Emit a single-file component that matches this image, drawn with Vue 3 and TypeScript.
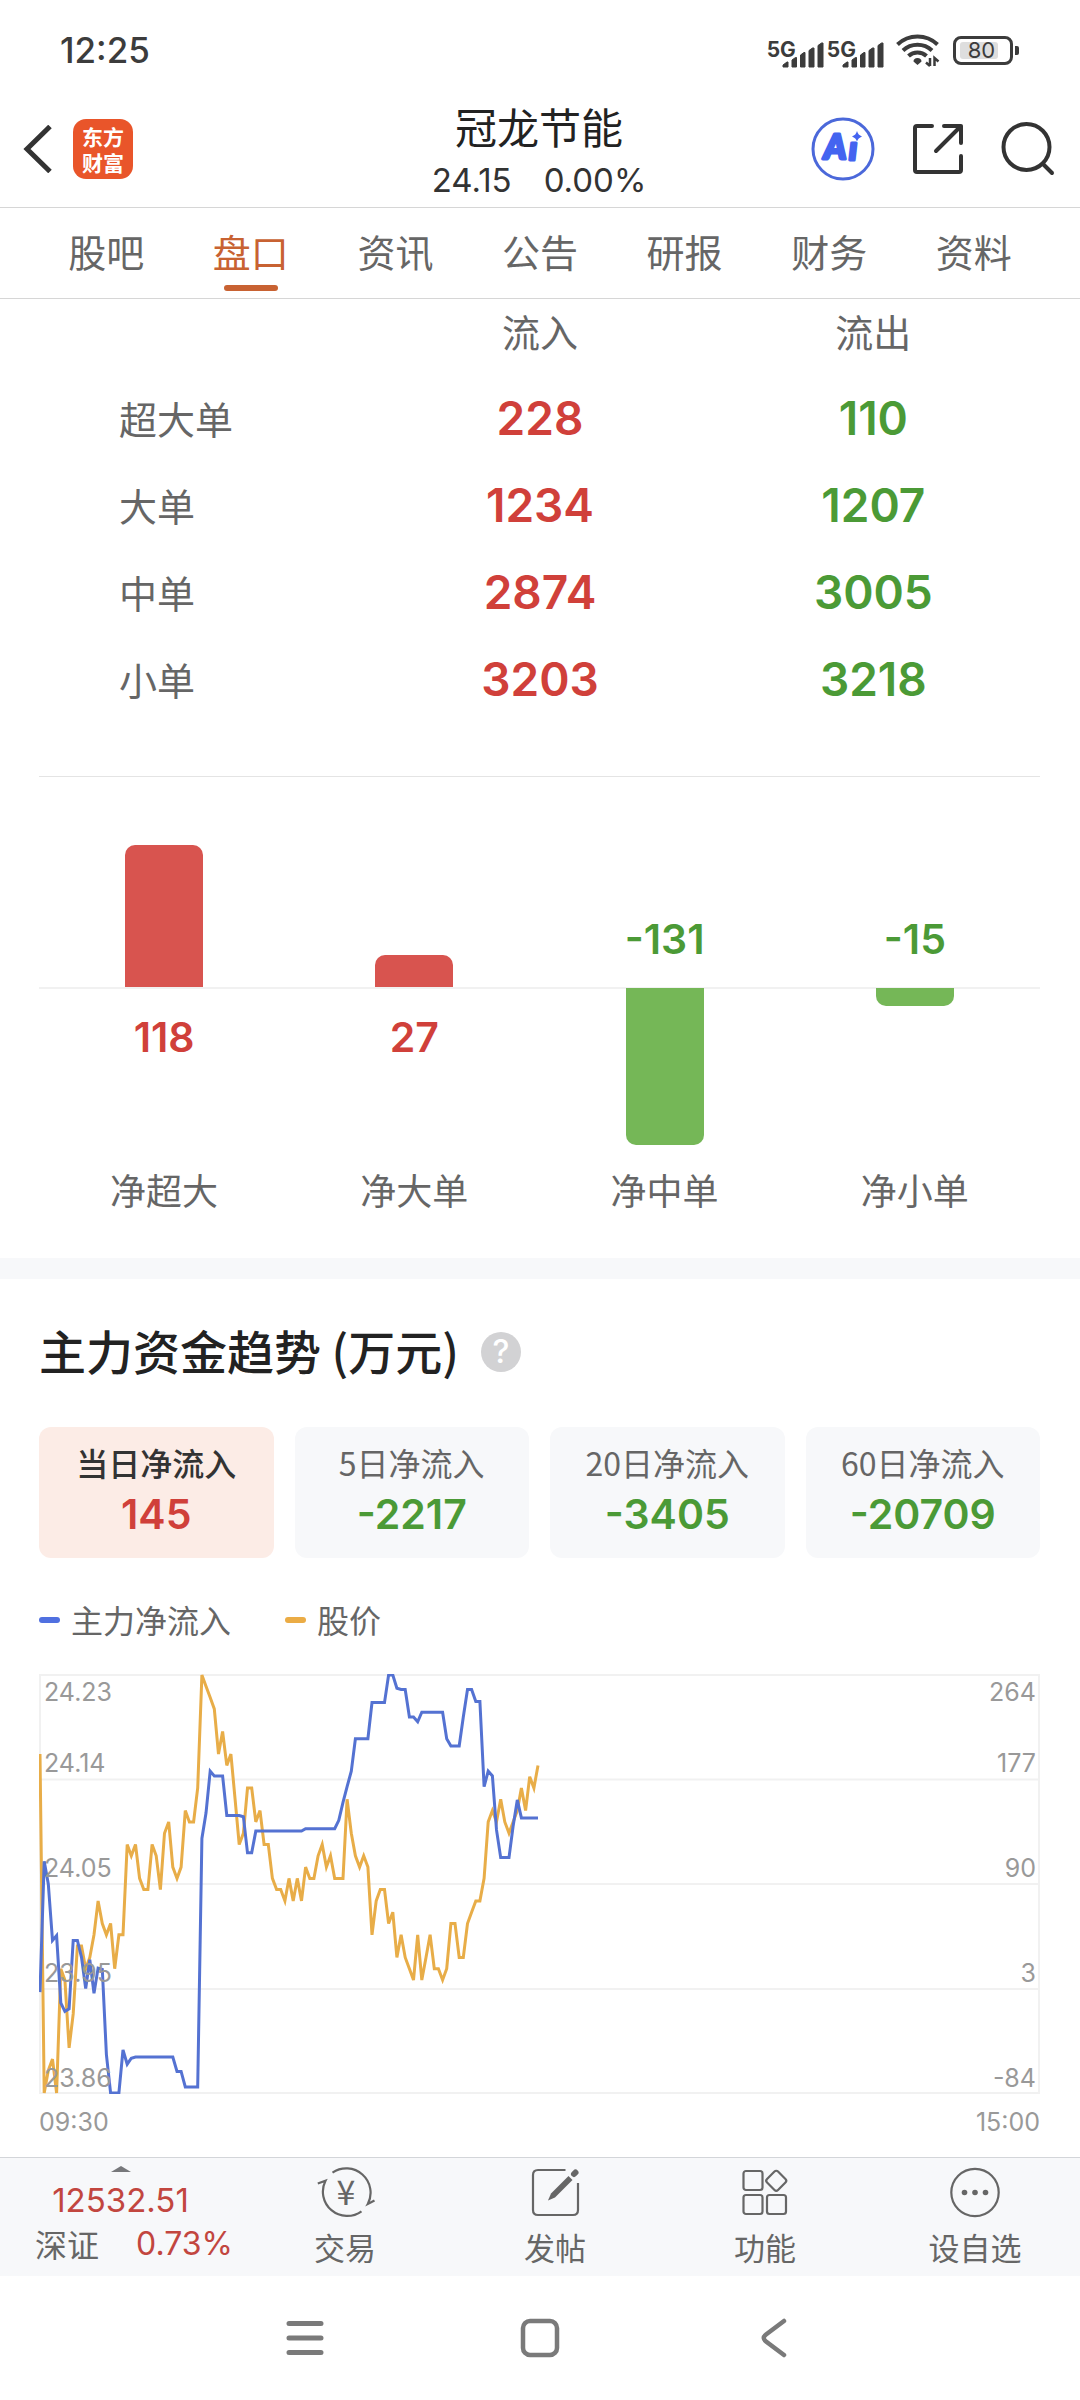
<script setup lang="ts">
interface OrderRow {
  label: string
  inflow: number
  outflow: number
}

interface NetBar {
  label: string
  value: number
}

interface Period {
  label: string
  value: number
}

const tabs: string[] = ['股吧', '盘口', '资讯', '公告', '研报', '财务', '资料']
const activeTab = '盘口'

const orders: OrderRow[] = [
  { label: '超大单', inflow: 228, outflow: 110 },
  { label: '大单', inflow: 1234, outflow: 1207 },
  { label: '中单', inflow: 2874, outflow: 3005 },
  { label: '小单', inflow: 3203, outflow: 3218 },
]

const netBars: NetBar[] = [
  { label: '净超大', value: 118 },
  { label: '净大单', value: 27 },
  { label: '净中单', value: -131 },
  { label: '净小单', value: -15 },
]

const barHeight = (value: number): string => `${Math.round(Math.abs(value) * 1.2)}px`

const periods: Period[] = [
  { label: '当日净流入', value: 145 },
  { label: '5日净流入', value: -2217 },
  { label: '20日净流入', value: -3405 },
  { label: '60日净流入', value: -20709 },
]

const priceAxis: string[][] = [['24.23', '24.14'], ['24.05'], ['23.95'], ['23.86']]
const flowAxis: string[][] = [['264', '177'], ['90'], ['3'], ['-84']]

// Minute prices, in cents above 23.86
const priceTicks: number[] = [
  30, 0, 2, 3, 0, 11, 10, 4, 7, 13, 13, 11, 12, 14, 17, 15, 14, 15, 11, 14,
  14, 22, 21, 22, 19, 18, 18, 22, 21, 18, 23, 24, 20, 19, 20, 25, 24, 24, 27, 37,
  36, 35, 34, 30, 32, 29, 30, 26, 22, 23, 27, 27, 24, 25, 22, 22, 19, 18, 18, 17,
  19, 17, 19, 17, 20, 19, 19, 21, 22, 20, 21, 19, 19, 19, 26, 23, 21, 20, 21, 20,
  14, 17, 18, 18, 15, 16, 12, 14, 12, 11, 10, 14, 10, 12, 14, 11, 11, 10, 11, 15,
  15, 12, 12, 15, 16, 17, 17, 19, 24, 25, 24, 26, 24, 23, 24, 25, 27, 25, 28, 27, 29,
]

// Minute net inflow of main funds, in units of 10,000 yuan
const netInflow: number[] = [
  0, 109, 90, 43, 47, -9, -16, -14, 43, 43, 29, 3, 27, -1, 20, 19, -52, -84, -84, -84,
  -48, -60, -55, -54, -54, -54, -54, -54, -54, -54, -54, -54, -54, -66, -66, -79, -79, -79, -79, 128,
  149, 184, 180, 180, 180, 147, 147, 147, 147, 146, 116, 116, 134, 134, 134, 134, 134, 134, 134, 134,
  134, 134, 134, 134, 136, 136, 136, 136, 136, 136, 136, 136, 143, 158, 171, 184, 211, 211, 211, 211,
  241, 241, 241, 241, 264, 264, 253, 252, 252, 229, 229, 225, 233, 233, 233, 233, 233, 233, 211, 205,
  205, 205, 229, 252, 252, 242, 242, 171, 184, 180, 135, 112, 112, 112, 138, 160, 145, 145, 145, 145, 145,
]

const chartHeight = 420
const toPoints = (values: number[], min: number, max: number): string =>
  values
    .map((v, i) => {
      const x = 1 + i * 4.15
      const y = 1 + ((max - v) / (max - min)) * (chartHeight - 2)
      return `${x.toFixed(1)},${y.toFixed(1)}`
    })
    .join(' ')

const pricePoints = toPoints(priceTicks, 0, 37)
const flowPoints = toPoints(netInflow, -84, 264)
</script>

<template>
  <div class="page">
    <div class="status">
      <time class="clock">12:25</time>
      <div class="signals">
        <div v-for="n in 2" :key="n" class="signal">
          <span class="generation">5G</span>
          <svg width="42" height="28" viewBox="0 0 42 28" aria-hidden="true">
            <path d="M1 27v-2l4-3h1v5zM10 27v-7l3.500-2.500h1V27zM18.500 27V15l3.500-2.500h1V27zM27 27V10.500L30.500 8h1.500v19zM36 27V5.500L39.500 3H41v24z" stroke="#3c3c3c" stroke-linejoin="round" />
          </svg>
        </div>
        <svg class="wifi" width="46" height="36" viewBox="0 0 46 36" fill="none" stroke="#3c3c3c" stroke-width="4" aria-hidden="true">
          <path d="M2.500 12.500a29 29 0 0 1 40 0M8 18.500a21 21 0 0 1 29 0M13.500 24a13 13 0 0 1 18 0" />
          <path d="M22.500 26c2.500 0 4 1.500 4 3.500l-4 3.500-4-3.500c0-2 1.500-3.500 4-3.500z" fill="#3c3c3c" stroke="none" />
          <path d="M35 26v8M31 30.500l4 3.500M39.500 34v-8l4 3.500" stroke-width="2.500" />
        </svg>
        <div class="battery"><span>80</span></div>
      </div>
    </div>

    <header class="header">
      <div class="header-left">
        <button class="icon-button" aria-label="返回">
          <svg width="30" height="48" viewBox="0 0 30 48" fill="none" stroke="#333" stroke-width="5"><path d="M27 1.500L4 24l23 22.500" /></svg>
        </button>
        <a href="#" class="logo"><span>东方</span><span>财富</span></a>
      </div>
      <div class="heading">
        <h1>冠龙节能</h1>
        <p class="quote"><span>24.15</span><span>0.00%</span></p>
      </div>
      <div class="header-right">
        <button class="icon-button" aria-label="Ai">
          <svg width="64" height="64" viewBox="0 0 64 64" fill="#4464f0">
            <circle cx="32" cy="32" r="30" fill="none" stroke="#4b68da" stroke-width="3" />
            <g stroke="#4464f0" stroke-width="3" stroke-linejoin="round" font-weight="900" font-style="italic" font-family="Lato, sans-serif">
              <text x="13" y="42" font-size="34">A</text>
              <text x="38" y="43" font-size="32">ı</text>
            </g>
            <path d="M46 14q1 4 5 5.500q-4 1.500-5 5q-1-3.500-5-5q4-1.500 5-5.500z" />
          </svg>
        </button>
        <button class="icon-button" aria-label="分享">
          <svg width="52" height="52" viewBox="0 0 52 52" fill="none" stroke="#333" stroke-width="4" stroke-linecap="round" stroke-linejoin="round">
            <path d="M20 3H5Q3 3 3 5v42q0 2 2 2h42q2 0 2-2V33M32 3h17v17M49 3L24 28" />
          </svg>
        </button>
        <button class="icon-button" aria-label="搜索">
          <svg width="54" height="54" viewBox="0 0 54 54" fill="none" stroke="#333" stroke-width="4" stroke-linecap="round">
            <circle cx="25.500" cy="25" r="23" /><path d="M42 42l9 9" />
          </svg>
        </button>
      </div>
    </header>

    <nav class="tabs">
      <a v-for="tab in tabs" :key="tab" href="#" class="tab" :class="{ active: tab === activeTab }">{{ tab }}</a>
    </nav>

    <main class="content">
      <table class="orders">
        <thead>
          <tr><th></th><th scope="col">流入</th><th scope="col">流出</th></tr>
        </thead>
        <tbody>
          <tr v-for="row in orders" :key="row.label">
            <th scope="row">{{ row.label }}</th>
            <td class="up">{{ row.inflow }}</td>
            <td class="down">{{ row.outflow }}</td>
          </tr>
        </tbody>
      </table>

      <section class="net">
        <div v-for="bar in netBars" :key="bar.label" class="net-column">
          <div class="net-upper">
            <span v-if="bar.value < 0" class="net-value down">{{ bar.value }}</span>
            <div v-else class="bar bar-up" :style="{ height: barHeight(bar.value) }"></div>
          </div>
          <div class="net-lower">
            <span v-if="bar.value > 0" class="net-value up">{{ bar.value }}</span>
            <div v-else class="bar bar-down" :style="{ height: barHeight(bar.value) }"></div>
          </div>
          <span class="net-label">{{ bar.label }}</span>
        </div>
      </section>

      <section class="trend">
        <div class="trend-title">
          <h2>主力资金趋势 (万元)</h2>
          <button class="help" aria-label="说明">?</button>
        </div>

        <div class="periods">
          <button v-for="(period, i) in periods" :key="period.label" class="period" :class="{ selected: i === 0 }">
            <span class="period-label">{{ period.label }}</span>
            <span class="period-value" :class="period.value < 0 ? 'down' : 'up'">{{ period.value }}</span>
          </button>
        </div>

        <div class="legend">
          <span class="legend-item flow">主力净流入</span>
          <span class="legend-item price">股价</span>
        </div>

        <div class="chart">
          <svg class="plot" width="100%" height="420" viewBox="0 0 1001 420" preserveAspectRatio="none" fill="none" aria-hidden="true">
            <path d="M1 1H1000V419H1zM1 105.500H1000M1 210H1000M1 315H1000" stroke="#f1f1f1" stroke-width="2" vector-effect="non-scaling-stroke" />
            <polyline :points="pricePoints" stroke="#e8ad48" stroke-width="3" vector-effect="non-scaling-stroke" />
            <polyline :points="flowPoints" stroke="#5472d2" stroke-width="3" vector-effect="non-scaling-stroke" />
          </svg>
          <div class="axes">
            <div class="axis">
              <div v-for="(band, i) in priceAxis" :key="i" class="band"><span v-for="t in band" :key="t">{{ t }}</span></div>
            </div>
            <div class="axis axis-right">
              <div v-for="(band, i) in flowAxis" :key="i" class="band"><span v-for="t in band" :key="t">{{ t }}</span></div>
            </div>
          </div>
        </div>
        <div class="times"><span>09:30</span><span>15:00</span></div>
      </section>
    </main>

    <footer class="toolbar">
      <a href="#" class="index">
        <svg class="caret" width="20" height="6" viewBox="0 0 20 6" aria-hidden="true"><path d="M0 6L10 0l10 6z" fill="#77787b" /></svg>
        <span class="index-value">12532.51</span>
        <span class="index-row"><span class="index-name">深证</span><span class="index-change">0.73%</span></span>
      </a>
      <button class="tool">
        <svg width="60" height="54" viewBox="0 0 60 54" fill="none" stroke="#666" stroke-width="2.200">
          <path d="M17.500 7.700A24.300 24.300 0 0 1 52.800 39L59.500 35.500M2.800 18.500L10.500 15.700A24.300 24.300 0 0 0 46.500 46.300" />
          <text x="31" y="40" font-size="34" text-anchor="middle" fill="#666" stroke="none" font-family="Noto Sans CJK SC, sans-serif">¥</text>
        </svg>
        <span>交易</span>
      </button>
      <button class="tool">
        <svg width="60" height="54" viewBox="0 0 60 54" fill="none" stroke="#666" stroke-width="2.200">
          <path d="M40.500 5H13Q8 5 8 10v35q0 5 5 5h35q5 0 5-5V18" />
          <path d="M23 35.500l3-7L43.500 11l4 4L30 32.500z" fill="#666" stroke="none" />
          <path d="M49 9l1.500-1.500" stroke-width="6" stroke-linecap="round" />
        </svg>
        <span>发帖</span>
      </button>
      <button class="tool">
        <svg width="60" height="54" viewBox="0 0 60 54" fill="none" stroke="#666" stroke-width="2.200">
          <rect x="8.500" y="6" width="19" height="19" rx="2.500" />
          <rect x="8.500" y="30" width="19" height="19" rx="2.500" />
          <rect x="32" y="30" width="19" height="19" rx="2.500" />
          <rect x="33.500" y="8" width="15.500" height="15.500" rx="2.500" transform="rotate(45 41.250 15.750)" />
        </svg>
        <span>功能</span>
      </button>
      <button class="tool">
        <svg width="60" height="54" viewBox="0 0 60 54" fill="none" stroke="#666" stroke-width="2.200">
          <circle cx="30" cy="27.500" r="23.700" />
          <g fill="#666" stroke="none"><circle cx="19.500" cy="27.500" r="2.800" /><circle cx="30" cy="27.500" r="2.800" /><circle cx="40.500" cy="27.500" r="2.800" /></g>
        </svg>
        <span>设自选</span>
      </button>
    </footer>

    <nav class="system" aria-label="系统导航">
      <button aria-label="菜单">
        <svg width="40" height="40" viewBox="0 0 40 40" fill="none" stroke="#7a7a7a" stroke-width="5" stroke-linecap="round"><path d="M4 5.500h32M4 20h32M4 34.500h32" /></svg>
      </button>
      <button aria-label="主页">
        <svg width="40" height="40" viewBox="0 0 40 40" fill="none" stroke="#7a7a7a" stroke-width="4.500"><rect x="3" y="3" width="34" height="34" rx="7" /></svg>
      </button>
      <button aria-label="后退">
        <svg width="40" height="40" viewBox="0 0 40 40" fill="none" stroke="#7a7a7a" stroke-width="4.500" stroke-linecap="round"><path d="M29 3L11 16.500q-4.500 3.500 0 7L29 37" /></svg>
      </button>
    </nav>
  </div>
</template>

<style>
body {
  margin: 0;
  background: #fff;
}
</style>

<style scoped>
.page {
  display: flex;
  flex-direction: column;
  min-height: 100vh;
  background: #fff;
  color: #666;
  font-family: "Noto Sans CJK SC", "Noto Sans", sans-serif;
}

.page * {
  box-sizing: border-box;
}

.status,
.quote,
.orders td,
.net-value,
.help,
.period-value,
.axes,
.times,
.index-value,
.index-change {
  font-family: Inter, "Noto Sans CJK SC", sans-serif;
}

button {
  padding: 0;
  border: 0;
  background: none;
  color: inherit;
  font: inherit;
  cursor: pointer;
}

a {
  color: inherit;
  text-decoration: none;
}

svg {
  display: block;
}

h1,
h2,
p {
  margin: 0;
}

.up {
  color: #d0403a;
}

.down {
  color: #4b9a36;
}

.status {
  display: flex;
  align-items: center;
  justify-content: space-between;
  height: 90px;
  padding: 10px 60px 0;
}

.clock {
  color: #3c3c3c;
  font-size: 35px;
  font-weight: 500;
  line-height: 48px;
}

.signals {
  display: flex;
  align-items: center;
  gap: 3px;
  color: #3c3c3c;
  fill: #3c3c3c;
}

.signal {
  display: flex;
  align-items: flex-end;
}

.generation {
  margin-right: -14px;
  font-size: 21px;
  font-weight: 700;
  line-height: 36px;
}

.wifi {
  margin-left: 8px;
}

.battery {
  position: relative;
  width: 60px;
  height: 29px;
  margin: 0 7px 0 9px;
  padding: 3px 12px 3px 4px;
  border: 3px solid #3c3c3c;
  border-radius: 8px;
}

.battery::after {
  content: "";
  position: absolute;
  top: 7px;
  right: -9px;
  width: 4px;
  height: 9px;
  border-radius: 0 2px 2px 0;
  background: #3c3c3c;
}

.battery span {
  display: block;
  padding-left: 5px;
  border-radius: 3px;
  background: #dedede;
  font-size: 22px;
  line-height: 17px;
  text-align: center;
}

.header {
  display: grid;
  grid-template-columns: 1fr auto 1fr;
  align-items: center;
  height: 118px;
  padding: 0 25px 0 23px;
  border-bottom: 1px solid #d6d6d6;
}

.header-left {
  display: flex;
  align-items: center;
  gap: 20px;
}

.logo {
  display: flex;
  flex-direction: column;
  align-items: center;
  justify-content: center;
  width: 60px;
  height: 60px;
  border-radius: 13px;
  background: #e9552a;
  color: #fff;
  font-size: 21px;
  font-weight: 700;
  line-height: 26px;
}

.heading {
  padding-top: 8px;
  text-align: center;
}

h1 {
  color: #222;
  font-size: 42px;
  font-weight: 400;
  line-height: 54px;
}

.quote {
  display: flex;
  justify-content: center;
  gap: 32px;
  color: #333;
  font-size: 33px;
  line-height: 54px;
}

.header-right {
  display: flex;
  align-items: center;
  justify-content: flex-end;
  gap: 37px;
}

.tabs {
  display: flex;
  height: 91px;
  padding: 0 34px;
  border-bottom: 1px solid #d6d6d6;
}

.tab {
  position: relative;
  flex: 1;
  font-size: 38px;
  line-height: 85px;
  text-align: center;
}

.tab.active {
  color: #c86232;
}

.tab.active::after {
  content: "";
  position: absolute;
  bottom: 7px;
  left: 50%;
  width: 54px;
  height: 6px;
  margin-left: -27px;
  border-radius: 3px;
  background: #c86232;
}

.content {
  flex: 1;
}

.orders {
  width: calc(100% - 80px);
  margin: 0 40px 54px;
  border-collapse: collapse;
  table-layout: fixed;
  font-size: 38px;
  line-height: 44px;
}

.orders th {
  padding: 0;
  font-weight: 400;
}

.orders thead th {
  height: 75px;
  padding-bottom: 11px;
}

.orders tbody th {
  height: 87px;
  padding-left: 79px;
  text-align: left;
}

.orders td {
  padding: 0;
  font-size: 46px;
  font-weight: 600;
  text-align: center;
}

.net {
  display: flex;
  margin: 0 40px 0 39px;
  padding-bottom: 49px;
  border-top: 1px solid #e4e4e4;
}

.net-column {
  display: flex;
  flex: 1;
  flex-direction: column;
  align-items: center;
}

.net-upper,
.net-lower {
  display: flex;
  flex-direction: column;
  align-items: center;
  width: 100%;
}

.net-upper {
  justify-content: flex-end;
  height: 210px;
}

.net-lower {
  height: 182px;
  border-top: 2px solid #f1f1f1;
}

.net-value {
  margin: 26px 0;
  font-size: 41px;
  font-weight: 600;
  line-height: 44px;
}

.bar {
  width: 78px;
}

.bar-up {
  border-radius: 10px 10px 0 0;
  background: #d8544f;
}

.bar-down {
  margin-top: -1px;
  border-radius: 0 0 10px 10px;
  background: #75b757;
}

.net-label {
  font-size: 36px;
  line-height: 40px;
}

.trend {
  padding: 41px 40px 17px 39px;
  border-top: 21px solid #f7f8fa;
}

.trend-title {
  display: flex;
  align-items: center;
  gap: 22px;
  color: #222;
}

h2 {
  font-size: 47px;
  font-weight: 500;
  line-height: 60px;
}

.help {
  width: 40px;
  height: 40px;
  margin-top: 4px;
  border-radius: 50%;
  background: #d2d2d4;
  color: #fff;
  font-size: 32px;
  font-weight: 500;
  line-height: 40px;
}

.periods {
  display: grid;
  grid-template-columns: repeat(4, 1fr);
  gap: 21px;
  margin-top: 47px;
}

.period {
  display: flex;
  flex-direction: column;
  align-items: center;
  gap: 4px;
  padding: 11px 0 20px;
  border-radius: 12px;
  background: #f7f8fa;
  line-height: 48px;
}

.period.selected {
  background: #fcece6;
}

.period-label {
  font-size: 32px;
}

.selected .period-label {
  color: #333;
  font-weight: 500;
}

.period-value {
  font-size: 41px;
  font-weight: 600;
}

.legend {
  display: flex;
  gap: 54px;
  margin-top: 41px;
  font-size: 32px;
  line-height: 40px;
}

.legend-item {
  display: flex;
  align-items: center;
  gap: 11px;
}

.legend-item::before {
  content: "";
  width: 21px;
  height: 6px;
  margin-top: 2px;
  border-radius: 3px;
  background: currentColor;
}

.flow::before {
  background: #5070e0;
}

.price::before {
  background: #ebac45;
}

.chart {
  position: relative;
  margin-top: 35px;
}

.axes {
  position: absolute;
  inset: 0;
  display: flex;
  justify-content: space-between;
  padding: 0 4px 0 5px;
  color: #999;
  font-size: 25px;
  line-height: 30px;
}

.axis {
  display: flex;
  flex-direction: column;
}

.band {
  display: flex;
  flex: 1;
  flex-direction: column;
  justify-content: flex-end;
  padding: 3px 0 1px;
}

.band:first-child {
  justify-content: space-between;
}

.axis-right {
  text-align: right;
}

.times {
  display: flex;
  justify-content: space-between;
  margin-top: 10px;
  color: #999;
  font-size: 25px;
  line-height: 36px;
}

.toolbar {
  display: grid;
  grid-template-columns: 8fr 7fr 7fr 7fr 7fr;
  height: 119px;
  border-top: 1px solid #d3d5d9;
  background: #f7f8fa;
}

.index {
  display: flex;
  flex-direction: column;
  align-items: center;
  padding: 8px 7px 0 35px;
}

.caret {
  margin-right: 27px;
}

.index-value {
  margin: 6px 27px 0 0;
  color: #c2463f;
  font-size: 33px;
  line-height: 44px;
}

.index-row {
  display: flex;
  align-items: center;
  justify-content: space-between;
  width: 100%;
  line-height: 40px;
}

.index-name {
  font-size: 32px;
}

.index-change {
  padding-top: 2px;
  color: #c2463f;
  font-size: 32px;
}

.tool {
  display: flex;
  flex-direction: column;
  align-items: center;
  gap: 10px;
  padding-top: 7px;
  font-size: 31px;
  line-height: 36px;
}

.system {
  display: flex;
  height: 124px;
  padding: 0 187px;
}

.system button {
  display: flex;
  flex: 1;
  align-items: center;
  justify-content: center;
}
</style>
